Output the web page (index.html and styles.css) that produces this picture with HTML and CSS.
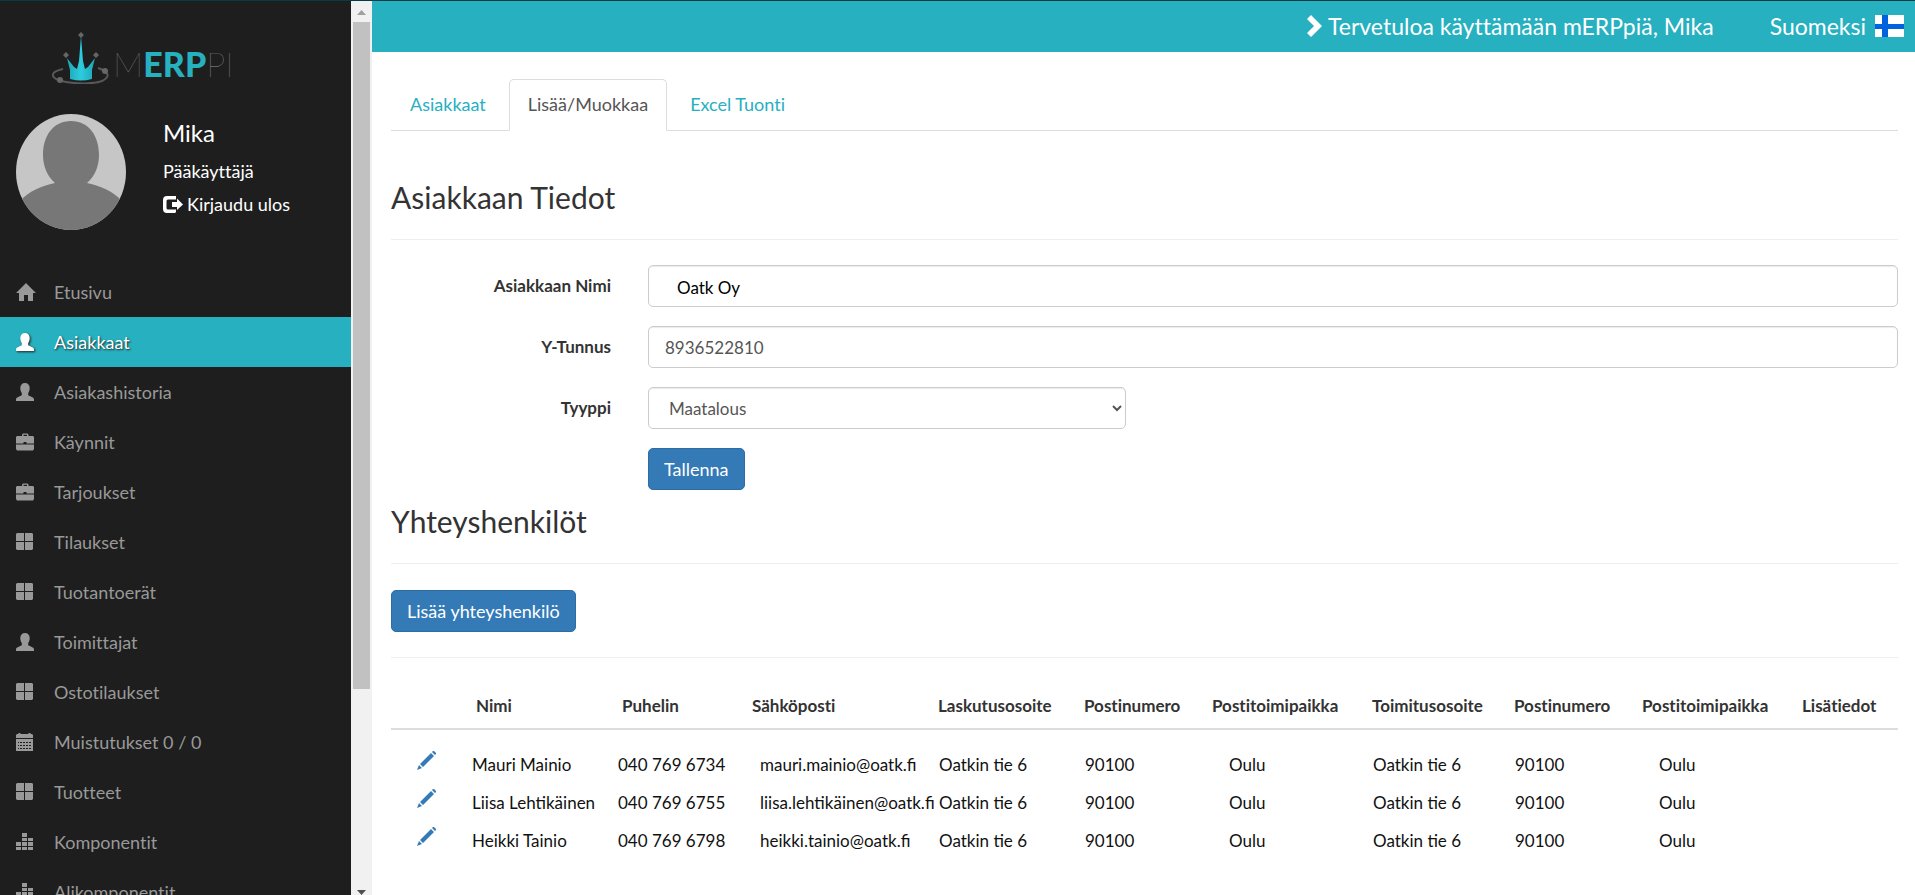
FILE: index.html
```html
<!DOCTYPE html>
<html lang="fi">
<head>
<meta charset="utf-8">
<meta name="viewport" content="width=device-width, initial-scale=1">
<title>mERPpi – Asiakkaat</title>
<link rel="stylesheet" href="styles.css">
</head>
<body>
<svg class="sprite" aria-hidden="true">
  <symbol id="i-home" viewBox="0 0 20 18" preserveAspectRatio="xMinYMid"><path d="M10 0 20 10H17V18H12V12H8V18H3V10H0Z"/></symbol>
  <symbol id="i-user" viewBox="0 0 18 18" preserveAspectRatio="xMinYMid"><path d="M9 0c3 0 4.700 2 4.700 5 0 2-.6 3.800-1.500 5v2c.3.6 1.200.9 2.600 1.500 2.200.9 3.200 1.700 3.200 3V18H0v-1.500c0-1.300 1-2.100 3.200-3 1.400-.6 2.300-.9 2.600-1.500v-2C4.900 8.800 4.300 7 4.300 5c0-3 1.700-5 4.700-5Z"/></symbol>
  <symbol id="i-case" viewBox="0 0 18 18" preserveAspectRatio="xMinYMid"><path fill-rule="evenodd" d="M6 3V1.500L7 .5h4.500l1 1V3H17l1 1v6.500H0V4l1-1ZM7.500 3H11V1.800H7.500ZM7.500 9v1.500h3V9ZM0 11.500h18V16l-1 1.500H1L0 16Z"/></symbol>
  <symbol id="i-grid" viewBox="0 0 18 18" preserveAspectRatio="xMinYMid"><path d="M1 0h7v8H0V1Zm8 0h7l1 1v7H9ZM0 9h8v8H1l-1-1Zm9 0h8v7l-1 1H9Z"/></symbol>
  <symbol id="i-cal" viewBox="0 0 18 18" preserveAspectRatio="xMinYMid"><path fill-rule="evenodd" d="M1 1h1l1-1h1l1 1h7l1-1h1l1 1h1l1 1v3H0V2ZM0 6h17v12H0ZM2 9v1h1V9Zm2 0v1h2V9Zm3 0v1h2V9Zm3 0v1h2V9Zm3 0v1h2V9ZM2 12v1h1v-1Zm2 0v1h2v-1Zm3 0v1h2v-1Zm3 0v1h2v-1Zm3 0v1h2v-1ZM2 15v1h1v-1Zm2 0v1h2v-1Zm3 0v1h2v-1Zm3 0v1h2v-1Zm3 0v1h2v-1Z"/></symbol>
  <symbol id="i-bars" viewBox="0 0 18 18" preserveAspectRatio="xMinYMid"><path d="M6 0h5v4H6Zm0 5h5v3H6Zm6 0h5v3h-5ZM0 9h5v4H0Zm6 0h5v4H6Zm6 0h5v4h-5ZM0 14h5v3H0Zm6 0h5v3H6Zm6 0h5v3h-5Z"/></symbol>
  <symbol id="i-out" viewBox="0 0 20 17"><path d="M13 0V3.500H5Q3.500 3.500 3.500 5v7q0 1.500 1.500 1.500h8V16l-1 1H4Q0 17 0 13V4Q0 0 4 0ZM14 2.500 20 8.500 14 14v-3H9V6h5Z"/></symbol>
  <symbol id="i-chev" viewBox="0 0 15 22"><path d="M4 0 15 11 4 22 0 18 7 11 0 4Z"/></symbol>
  <symbol id="i-pen" viewBox="0 0 19 19"><path d="M14 2 17 5 6 16 3 13ZM15 1 16 0h1l2 2v1l-1 1ZM2 14l3 3-5 2Z"/></symbol>
</svg>

<div class="app">
  <aside class="sidebar">
    <div class="side-content">
      <a class="logo" href="#" aria-label="mERPpi">
        <svg class="crown" viewBox="0 0 58 52" aria-hidden="true">
          <defs><linearGradient id="g"><stop offset="0" stop-color="#1fa5b3"/><stop offset=".5" stop-color="#2cccdf"/><stop offset="1" stop-color="#1fa5b3"/></linearGradient></defs>
          <path d="M11 37C-3 40-3 47 14 50c12 2 28 2 36-1 8-4 8-9-4-13" fill="none" stroke="#58585a" stroke-width="2"/>
          <path d="M18 47V38L15 26l7 9 3 2 2-8L29 4l2 25 2 8 3-2 7-9-3 12v9q-11 3-22 0Z" fill="url(#g)"/>
          <g fill="#666"><path d="m29 0 3 3-3 3-3-3ZM14 20l3 3-3 3-3-3ZM44 20l3 3-3 3-3-3Z"/><circle cx="8" cy="48" r="3"/><circle cx="53" cy="39" r="3"/></g>
        </svg>
        <span class="word">M<b>ERP</b>PI</span>
      </a>
      <div class="profile">
        <svg class="avatar" viewBox="0 0 110 116" role="img" aria-label="Käyttäjäkuva">
          <clipPath id="c"><ellipse cx="55" cy="58" rx="55" ry="58"/></clipPath>
          <g clip-path="url(#c)"><path fill="#c6c6c6" d="M0 0h110v116H0Z"/><path fill="#777" d="M55 7c18 0 28 15 28 34 0 11-4 21-12 28 14 3 26 8 35 18v29H4V87c9-10 21-15 35-18-8-7-12-17-12-28C27 22 37 7 55 7Z"/></g>
        </svg>
        <div class="who">
          <span class="name">Mika</span>
          <span class="role">Pääkäyttäjä</span>
          <a class="logout" href="#"><svg class="ico-out" aria-hidden="true"><use href="#i-out"/></svg>Kirjaudu ulos</a>
        </div>
      </div>
      <nav class="menu">
        <a href="#"><svg aria-hidden="true"><use href="#i-home"/></svg>Etusivu</a>
        <a href="#" class="active"><svg aria-hidden="true"><use href="#i-user"/></svg>Asiakkaat</a>
        <a href="#"><svg aria-hidden="true"><use href="#i-user"/></svg>Asiakashistoria</a>
        <a href="#"><svg aria-hidden="true"><use href="#i-case"/></svg>Käynnit</a>
        <a href="#"><svg aria-hidden="true"><use href="#i-case"/></svg>Tarjoukset</a>
        <a href="#"><svg aria-hidden="true"><use href="#i-grid"/></svg>Tilaukset</a>
        <a href="#"><svg aria-hidden="true"><use href="#i-grid"/></svg>Tuotantoerät</a>
        <a href="#"><svg aria-hidden="true"><use href="#i-user"/></svg>Toimittajat</a>
        <a href="#"><svg aria-hidden="true"><use href="#i-grid"/></svg>Ostotilaukset</a>
        <a href="#"><svg aria-hidden="true"><use href="#i-cal"/></svg>Muistutukset 0 / 0</a>
        <a href="#"><svg aria-hidden="true"><use href="#i-grid"/></svg>Tuotteet</a>
        <a href="#"><svg aria-hidden="true"><use href="#i-bars"/></svg>Komponentit</a>
        <a href="#"><svg aria-hidden="true"><use href="#i-bars"/></svg>Alikomponentit</a>
      </nav>
    </div>
    <div class="scroll" aria-hidden="true">
      <svg class="arrow" viewBox="0 0 21 21"><path fill="#a0a0a0" d="M6 14 10.500 9 15 14Z"/></svg>
      <span class="thumb"></span>
      <span class="rest"></span>
      <svg class="arrow" viewBox="0 0 21 21"><path fill="#505050" d="M6 16 10.500 21 15 16Z"/></svg>
    </div>
  </aside>

  <main class="main">
    <header class="topbar">
      <span class="welcome"><svg class="ico-chev" aria-hidden="true"><use href="#i-chev"/></svg>Tervetuloa käyttämään mERPpiä, Mika</span>
      <a class="lang" href="#">Suomeksi
        <svg class="flag" viewBox="0 0 29 22" preserveAspectRatio="none" aria-hidden="true"><path fill="#fff" d="M0 0h29v22H0Z"/><path fill="#0062dc" d="M7 0h6v9h16v5H13v8H7v-8H0V9h7Z"/></svg></a>
    </header>

    <div class="content">
      <nav class="tabs">
        <a href="#">Asiakkaat</a>
        <a href="#" class="current">Lisää/Muokkaa</a>
        <a href="#">Excel Tuonti</a>
      </nav>

      <h1>Asiakkaan Tiedot</h1>
      <form class="form">
        <label for="nimi">Asiakkaan Nimi</label>
        <input class="field customer" id="nimi" type="text" value="Oatk Oy">
        <label for="ytunnus">Y-Tunnus</label>
        <input class="field" id="ytunnus" type="text" value="8936522810">
        <label for="tyyppi">Tyyppi</label>
        <select class="field kind" id="tyyppi"><option>Maatalous</option></select>
        <button class="btn save" type="button">Tallenna</button>
      </form>

      <h2>Yhteyshenkilöt</h2>
      <div class="actions"><button class="btn" type="button">Lisää yhteyshenkilö</button></div>

      <table class="contacts">
        <colgroup><col class="w-edit"><col class="w-name"><col class="w-phone"><col class="w-mail"><col class="w-addr"><col class="w-zip"><col class="w-city"><col class="w-addr2"><col class="w-zip"><col class="w-city"><col class="w-info"></colgroup>
        <thead>
          <tr><th></th><th>Nimi</th><th>Puhelin</th><th>Sähköposti</th><th>Laskutusosoite</th><th>Postinumero</th><th>Postitoimipaikka</th><th>Toimitusosoite</th><th>Postinumero</th><th>Postitoimipaikka</th><th>Lisätiedot</th></tr>
        </thead>
        <tbody>
          <tr><td class="edit"><a href="#" aria-label="Muokkaa"><svg aria-hidden="true"><use href="#i-pen"/></svg></a></td><td class="near">Mauri Mainio</td><td class="near">040 769 6734</td><td class="mail">mauri.mainio@oatk.fi</td><td>Oatkin tie 6</td><td>90100</td><td class="city">Oulu</td><td>Oatkin tie 6</td><td>90100</td><td class="city">Oulu</td><td></td></tr>
          <tr><td class="edit"><a href="#" aria-label="Muokkaa"><svg aria-hidden="true"><use href="#i-pen"/></svg></a></td><td class="near">Liisa Lehtikäinen</td><td class="near">040 769 6755</td><td class="mail">liisa.lehtikäinen@oatk.fi</td><td>Oatkin tie 6</td><td>90100</td><td class="city">Oulu</td><td>Oatkin tie 6</td><td>90100</td><td class="city">Oulu</td><td></td></tr>
          <tr><td class="edit"><a href="#" aria-label="Muokkaa"><svg aria-hidden="true"><use href="#i-pen"/></svg></a></td><td class="near">Heikki Tainio</td><td class="near">040 769 6798</td><td class="mail">heikki.tainio@oatk.fi</td><td>Oatkin tie 6</td><td>90100</td><td class="city">Oulu</td><td>Oatkin tie 6</td><td>90100</td><td class="city">Oulu</td><td></td></tr>
        </tbody>
      </table>
    </div>
  </main>
</div>
</body>
</html>
```

FILE: styles.css
```css
* { box-sizing: border-box; }
body {
  margin: 0;
  font: 18px/26px Lato, "Open Sans", sans-serif;
  font-variant-ligatures: none;
  color: #333;
  background: #fff;
}
a { text-decoration: none; }
.sprite { display: none; }
.app {
  display: flex;
  height: 100vh;
  border-top: 1px solid #033d43;
  overflow: hidden;
}

/* sidebar */
.sidebar { display: flex; flex: none; width: 372px; }
.side-content { flex: 1; background: #1e1e1e; overflow: hidden; }
.logo { display: flex; align-items: flex-end; height: 83px; padding-left: 52px; gap: 3px; color: #999; }
.crown { width: 58px; height: 52px; }
.word { font-size: 34px; line-height: 40px; font-weight: 100; }
.word b { font-weight: 900; color: #27b0bf; }
.profile { display: flex; gap: 37px; padding: 30px 16px 0; height: 183px; }
.avatar { width: 110px; height: 116px; }
.who { display: flex; flex-direction: column; color: #fff; }
.name { font-size: 24px; line-height: 38px; }
.role { line-height: 39px; }
.logout { display: flex; align-items: center; gap: 4px; color: #fff; }
.ico-out { width: 20px; height: 17px; fill: #fff; }
.menu a {
  display: flex;
  align-items: center;
  gap: 18px;
  height: 50px;
  padding-left: 16px;
  color: #999;
  fill: #999;
}
.menu svg { width: 20px; height: 18px; }
.menu .active {
  background: #27b0bf;
  color: #fff;
  fill: #fff;
  text-shadow: 1px 1px 2px #222;
}
.active svg { filter: drop-shadow(1px 1px 1px #222); }
.scroll { display: flex; flex-direction: column; width: 21px; background: #f1f1f1; }
.arrow { flex: none; width: 21px; height: 21px; }
.thumb { flex: 667; margin: 0 2px; background: #c1c1c1; }
.rest { flex: 185; }

/* main area */
.main { flex: 1; min-width: 0; overflow: hidden; }
.topbar {
  display: flex;
  justify-content: flex-end;
  align-items: center;
  gap: 56px;
  height: 51px;
  padding: 0 11px 2px 0;
  background: #27b0bf;
  color: #fff;
  font-size: 23px;
}
.welcome, .lang { display: flex; align-items: center; color: #fff; }
.welcome { gap: 6px; }
.lang { gap: 9px; }
.ico-chev { width: 15px; height: 22px; fill: #fff; }
.flag { width: 29px; height: 22px; }
.content { padding: 27px 17px 0 19px; }
.tabs { display: flex; gap: 4px; border-bottom: 1px solid #ddd; }
.tabs a {
  padding: 11px 18px 13px;
  border: 1px solid transparent;
  border-radius: 5px 5px 0 0;
  margin-bottom: -1px;
  color: #27b0bf;
}
.tabs .current { color: #555; border-color: #ddd #ddd #fff; background: #fff; }
h1, h2 {
  margin: 0 0 25px;
  font-size: 30px;
  line-height: 34px;
  font-weight: 400;
  border-bottom: 1px solid #eee;
}
h1 { padding: 49px 0 25px; }
h2 { padding: 14px 0 25px; margin-bottom: 26px; }
.form {
  display: grid;
  grid-template-columns: 220px 1fr;
  column-gap: 37px;
  row-gap: 19px;
  align-items: center;
}
.form label { font-size: 17px; font-weight: 700; text-align: right; }
.field {
  width: 100%;
  height: 42px;
  padding: 0 16px;
  border: 1px solid #ccc;
  border-radius: 5px;
  background: #fff;
  box-shadow: inset 0 1px 1px rgba(0, 0, 0, .08);
  color: #555;
  font: inherit;
  font-size: 17px;
}
.customer { padding: 3px 28px 0; color: #000; }
.kind { width: 478px; }
.save { grid-column: 2; justify-self: start; }
.btn {
  height: 42px;
  padding: 0 15px;
  border: 1px solid #2e6da4;
  border-radius: 5px;
  background: #337ab7;
  color: #fff;
  font: inherit;
}
.actions { padding-bottom: 25px; border-bottom: 1px solid #eee; margin-bottom: 25px; }

/* contact list */
.contacts { width: 100%; table-layout: fixed; border-collapse: collapse; font-size: 17px; }
.contacts th {
  height: 46px;
  padding: 0 10px;
  border-bottom: 2px solid #ddd;
  text-align: left;
  font-weight: 700;
  white-space: nowrap;
}
.contacts td {
  height: 38px;
  padding: 0 0 0 11px;
  color: #111;
  font-variant-ligatures: normal;
  white-space: nowrap;
}
.contacts tbody::before { content: ""; display: block; height: 16px; }
.contacts .near { padding-left: 6px; }
.contacts .mail { padding-left: 18px; }
.contacts .city { padding-left: 27px; }
.contacts .edit { padding: 0 0 9px 26px; }
.edit svg { display: block; width: 19px; height: 19px; fill: #337ab7; }
.w-edit { width: 75px; }
.w-name { width: 146px; }
.w-phone { width: 130px; }
.w-mail { width: 186px; }
.w-addr { width: 146px; }
.w-zip { width: 128px; }
.w-city { width: 160px; }
.w-addr2 { width: 142px; }
.w-info { width: 106px; }
```
